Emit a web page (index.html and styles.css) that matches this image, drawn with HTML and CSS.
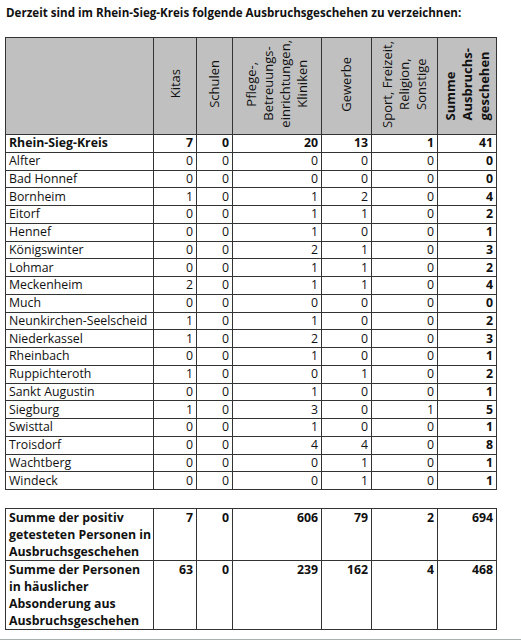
FILE: index.html
```html
<!DOCTYPE html>
<html lang="de">
    <head>
        <meta charset="UTF-8">
        <title>Ausbruchsgeschehen Rhein-Sieg-Kreis</title>
        <link rel="stylesheet" href="styles.css">
    </head>
    <body>
        <h2 class="clTitulo">Derzeit sind im Rhein-Sieg-Kreis folgende Ausbruchsgeschehen zu verzeichnen:</h2>
        <!-- Tabelle nach Orten -->
        <table class="clTabelle">
            <colgroup>
                <col class="clColName">
                <col class="clColKitas">
                <col class="clColSchulen">
                <col class="clColPflege">
                <col class="clColGewerbe">
                <col class="clColSport">
                <col class="clColSumme">
            </colgroup>
            <tr class="clKopf">
                <th></th>
                <th><span class="clDreh">Kitas</span></th>
                <th><span class="clDreh">Schulen</span></th>
                <th><span class="clDreh">Pflege-,<br>Betreuungs-<br>einrichtungen,<br>Kliniken</span></th>
                <th><span class="clDreh">Gewerbe</span></th>
                <th><span class="clDreh">Sport, Freizeit,<br>Religion,<br>Sonstige</span></th>
                <th><span class="clDreh clFett clLinks">Summe<br>Ausbruchs-<br>geschehen</span></th>
            </tr>
            <tr class="clFettZeile"><td>Rhein-Sieg-Kreis</td><td>7</td><td>0</td><td>20</td><td>13</td><td>1</td><td>41</td></tr>
            <tr><td>Alfter</td><td>0</td><td>0</td><td>0</td><td>0</td><td>0</td><td class="clFett">0</td></tr>
            <tr><td>Bad Honnef</td><td>0</td><td>0</td><td>0</td><td>0</td><td>0</td><td class="clFett">0</td></tr>
            <tr><td>Bornheim</td><td>1</td><td>0</td><td>1</td><td>2</td><td>0</td><td class="clFett">4</td></tr>
            <tr><td>Eitorf</td><td>0</td><td>0</td><td>1</td><td>1</td><td>0</td><td class="clFett">2</td></tr>
            <tr><td>Hennef</td><td>0</td><td>0</td><td>1</td><td>0</td><td>0</td><td class="clFett">1</td></tr>
            <tr><td>Königswinter</td><td>0</td><td>0</td><td>2</td><td>1</td><td>0</td><td class="clFett">3</td></tr>
            <tr><td>Lohmar</td><td>0</td><td>0</td><td>1</td><td>1</td><td>0</td><td class="clFett">2</td></tr>
            <tr><td>Meckenheim</td><td>2</td><td>0</td><td>1</td><td>1</td><td>0</td><td class="clFett">4</td></tr>
            <tr><td>Much</td><td>0</td><td>0</td><td>0</td><td>0</td><td>0</td><td class="clFett">0</td></tr>
            <tr><td>Neunkirchen-Seelscheid</td><td>1</td><td>0</td><td>1</td><td>0</td><td>0</td><td class="clFett">2</td></tr>
            <tr><td>Niederkassel</td><td>1</td><td>0</td><td>2</td><td>0</td><td>0</td><td class="clFett">3</td></tr>
            <tr><td>Rheinbach</td><td>0</td><td>0</td><td>1</td><td>0</td><td>0</td><td class="clFett">1</td></tr>
            <tr><td>Ruppichteroth</td><td>1</td><td>0</td><td>0</td><td>1</td><td>0</td><td class="clFett">2</td></tr>
            <tr><td>Sankt Augustin</td><td>0</td><td>0</td><td>1</td><td>0</td><td>0</td><td class="clFett">1</td></tr>
            <tr><td>Siegburg</td><td>1</td><td>0</td><td>3</td><td>0</td><td>1</td><td class="clFett">5</td></tr>
            <tr><td>Swisttal</td><td>0</td><td>0</td><td>1</td><td>0</td><td>0</td><td class="clFett">1</td></tr>
            <tr><td>Troisdorf</td><td>0</td><td>0</td><td>4</td><td>4</td><td>0</td><td class="clFett">8</td></tr>
            <tr><td>Wachtberg</td><td>0</td><td>0</td><td>0</td><td>1</td><td>0</td><td class="clFett">1</td></tr>
            <tr><td>Windeck</td><td>0</td><td>0</td><td>0</td><td>1</td><td>0</td><td class="clFett">1</td></tr>
        </table>
        <!-- Summen der Personen -->
        <table class="clTabelle clSummen">
            <colgroup>
                <col class="clColName">
                <col class="clColKitas">
                <col class="clColSchulen">
                <col class="clColPflege">
                <col class="clColGewerbe">
                <col class="clColSport">
                <col class="clColSumme">
            </colgroup>
            <tr><td>Summe der positiv<br>getesteten Personen in<br>Ausbruchsgeschehen</td><td>7</td><td>0</td><td>606</td><td>79</td><td>2</td><td>694</td></tr>
            <tr><td>Summe der Personen<br>in häuslicher<br>Absonderung aus<br>Ausbruchsgeschehen</td><td>63</td><td>0</td><td>239</td><td>162</td><td>4</td><td>468</td></tr>
        </table>
        <div class="clLeiste"></div>
    </body>
</html>
```

FILE: styles.css
```css
*{
    margin: 0px;
    padding: 0px;
}
body{
    background-color: white;
    font-family: "Open Sans", "Liberation Sans", sans-serif;
    color: #111;
}
.clTitulo{
    font-size: 11.6px;
    font-weight: bold;
    padding-top: 5px;
    padding-left: 6px;
    height: 32px;
    line-height: 16px;
}
.clTabelle{
    border-collapse: collapse;
    table-layout: fixed;
    width: 491px;
    margin-left: 5px;
    font-size: 12.3px;
}
.clColName{ width: 148px; }
.clColKitas{ width: 43px; }
.clColSchulen{ width: 36px; }
.clColPflege{ width: 89px; }
.clColGewerbe{ width: 50px; }
.clColSport{ width: 66px; }
.clColSumme{ width: 59px; }
td, th{
    border: 1px solid #333;
    padding: 0px 3px;
    text-align: right;
    height: 16.75px;
    line-height: 16px;
    white-space: nowrap;
}
td:first-child{
    text-align: left;
}
.clKopf th{
    background-color: #c0c0c0;
    height: 96px;
    text-align: center;
    vertical-align: middle;
    font-weight: normal;
    padding: 0px;
}
.clDreh{
    display: inline-block;
    writing-mode: vertical-rl;
    transform: rotate(180deg);
    text-align: center;
    font-size: 13px;
    line-height: 17px;
}
.clLinks{
    text-align: left;
}
.clFett, .clFettZeile td{
    font-weight: bold;
}
.clSummen{
    margin-top: 18px;
}
.clSummen td{
    font-weight: bold;
    vertical-align: top;
    line-height: 17px;
    padding-top: 0px;
    padding-bottom: 0px;
}
.clLeiste{
    margin-top: 9px;
    height: 4px;
    background-color: #a9b1b1;
}
```
